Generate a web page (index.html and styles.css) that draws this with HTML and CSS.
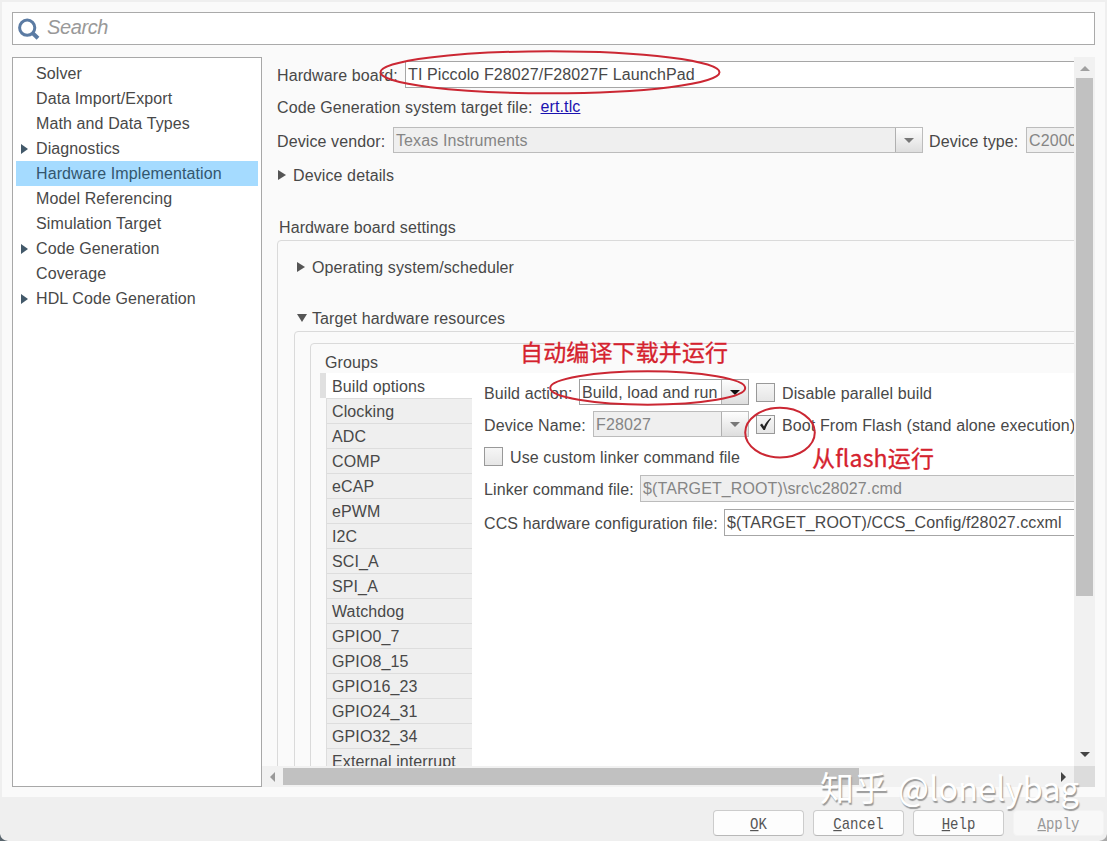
FILE: index.html
```html
<!DOCTYPE html>
<html lang="en">
<head>
    <meta charset="UTF-8">
    <meta name="viewport" content="width=device-width, initial-scale=1.0">
    <title>Configuration Parameters</title>
    <link rel="stylesheet" href="styles.css">
</head>
<body>
    <div class="dialog">
        <div class="dialog-body">
            <div class="search-box">
                <svg class="search-icon" width="24" height="24" viewBox="0 0 24 24">
                    <circle cx="9.2" cy="10.7" r="7.6" fill="none" stroke="#5b7ba3" stroke-width="3"/>
                    <path d="M14.5 16L20 21.2" stroke="#5b7ba3" stroke-width="4"/>
                </svg>
                <span class="search-placeholder">Search</span>
            </div>

            <div class="columns">
                <ul class="tree">
                    <li><span>Solver</span></li>
                    <li><span>Data Import/Export</span></li>
                    <li><span>Math and Data Types</span></li>
                    <li class="parent"><span>Diagnostics</span></li>
                    <li class="selected"><span>Hardware Implementation</span></li>
                    <li><span>Model Referencing</span></li>
                    <li><span>Simulation Target</span></li>
                    <li class="parent"><span>Code Generation</span></li>
                    <li><span>Coverage</span></li>
                    <li class="parent"><span>HDL Code Generation</span></li>
                </ul>

                <div class="scroll-area">
                    <div class="pane">
                        <div class="row row-board">
                            <label class="label-board">Hardware board:</label>
                            <div class="field field-board">TI Piccolo F28027/F28027F LaunchPad</div>
                        </div>
                        <div class="row row-target">
                            <label>Code Generation system target file:</label>
                            <a class="link" href="#">ert.tlc</a>
                        </div>
                        <div class="row row-vendor">
                            <label class="label-vendor">Device vendor:</label>
                            <div class="combo combo-vendor disabled">
                                <div class="combo-text">Texas Instruments</div>
                                <div class="combo-button"><i class="caret"></i></div>
                            </div>
                            <label class="label-type">Device type:</label>
                            <div class="field field-type disabled">C2000</div>
                        </div>
                        <div class="row row-details"><i class="arrow-right"></i><span>Device details</span></div>

                        <div class="section-title">Hardware board settings</div>
                        <div class="box box-settings">
                            <div class="row row-os"><i class="arrow-right"></i><span>Operating system/scheduler</span></div>
                            <div class="row row-resources"><i class="arrow-down"></i><span>Target hardware resources</span></div>
                            <div class="box box-resources">
                                <div class="box box-groups">
                                    <div class="groups-title">Groups</div>
                                    <div class="groups">
                                        <ul class="group-list">
                                            <li class="current">Build options</li>
                                            <li>Clocking</li>
                                            <li>ADC</li>
                                            <li>COMP</li>
                                            <li>eCAP</li>
                                            <li>ePWM</li>
                                            <li>I2C</li>
                                            <li>SCI_A</li>
                                            <li>SPI_A</li>
                                            <li>Watchdog</li>
                                            <li>GPIO0_7</li>
                                            <li>GPIO8_15</li>
                                            <li>GPIO16_23</li>
                                            <li>GPIO24_31</li>
                                            <li>GPIO32_34</li>
                                            <li>External interrupt</li>
                                        </ul>
                                        <div class="options">
                                            <div class="option-row">
                                                <label class="label-action">Build action:</label>
                                                <div class="combo combo-action">
                                                    <div class="combo-text">Build, load and run</div>
                                                    <div class="combo-button"><i class="caret"></i></div>
                                                </div>
                                                <div class="checkbox checkbox-second"></div>
                                                <span>Disable parallel build</span>
                                            </div>
                                            <div class="option-row">
                                                <label class="label-device">Device Name:</label>
                                                <div class="combo combo-device disabled">
                                                    <div class="combo-text">F28027</div>
                                                    <div class="combo-button"><i class="caret"></i></div>
                                                </div>
                                                <div class="checkbox checkbox-second">
                                                    <svg width="17" height="17" viewBox="0 0 17 17">
                                                        <path d="M3 9L5 7.5L7 10.5C8.5 7 10.5 4.5 13.5 2L14 3C11.5 6 9.5 9.5 8 14H6.5Z" fill="#222"/>
                                                    </svg>
                                                </div>
                                                <span>Boot From Flash (stand alone execution)</span>
                                            </div>
                                            <div class="option-row">
                                                <div class="checkbox"></div>
                                                <span>Use custom linker command file</span>
                                            </div>
                                            <div class="option-row">
                                                <label class="label-linker">Linker command file:</label>
                                                <div class="field field-file disabled">$(TARGET_ROOT)\src\c28027.cmd</div>
                                            </div>
                                            <div class="option-row option-row-last">
                                                <label class="label-ccs">CCS hardware configuration file:</label>
                                                <div class="field field-file">$(TARGET_ROOT)/CCS_Config/f28027.ccxml</div>
                                            </div>
                                        </div>
                                    </div>
                                </div>
                            </div>
                        </div>
                    </div>
                    <div class="scrollbar-v">
                        <i class="scroll-up"></i>
                        <div class="thumb-v"></div>
                        <i class="scroll-down"></i>
                    </div>
                    <div class="scrollbar-h">
                        <i class="scroll-left"></i>
                        <div class="thumb-h"></div>
                        <i class="scroll-right"></i>
                    </div>
                    <div class="scroll-corner"></div>
                </div>
            </div>
        </div>

        <div class="dialog-footer">
            <button><span><u>O</u>K</span></button>
            <button><span><u>C</u>ancel</span></button>
            <button><span><u>H</u>elp</span></button>
            <button disabled><span><u>A</u>pply</span></button>
        </div>
    </div>

    <!-- hand-drawn notes over the dialog -->
    <svg class="notes" width="1107" height="841" viewBox="0 0 1107 841">
        <g fill="none" stroke="#cb2733" stroke-width="2">
            <ellipse cx="550" cy="72.3" rx="169.5" ry="21"/>
            <ellipse cx="647.7" cy="388" rx="97.5" ry="16.7"/>
            <ellipse cx="780" cy="432.6" rx="34.8" ry="24.8"/>
        </g>
        <text class="note" x="520" y="361" textLength="208">自动编译下载并运行</text>
        <text class="note" x="812" y="467" textLength="122">从flash运行</text>
        <text class="watermark" x="820" y="801">知乎</text>
        <text class="watermark watermark-name" x="898" y="801" textLength="181" lengthAdjust="spacingAndGlyphs">@lonelybag</text>
        <path d="M0 834Q1 840 8 841H0Z" fill="#59656d"/>
        <path d="M1107 834Q1106 840 1099 841H1107Z" fill="#aaa"/>
    </svg>
</body>
</html>
```
FILE: styles.css
```css
* {
    box-sizing: border-box;
}

body {
    margin: 0;
    background: #efefef;
    color: #484848;
    font-family: "Liberation Sans", Arial, sans-serif;
    font-size: 16px;
    letter-spacing: 0.11px;
    line-height: 20px;
    white-space: nowrap;
    overflow: hidden;
}

ul {
    margin: 0;
    padding: 0;
    list-style: none;
}

.dialog {
    display: flex;
    flex-direction: column;
    width: 1107px;
    height: 841px;
    padding: 2px 2px 0;
}

.dialog-body {
    height: 795px;
    padding: 10px;
    background: #fafafa;
}

.search-box {
    display: flex;
    align-items: center;
    height: 33px;
    padding: 0 5px;
    margin-bottom: 12px;
    border: 1px solid #aaa;
    background: #fff;
}

.search-placeholder {
    margin: -3px 0 0 5px;
    color: #999;
    font-size: 20px;
    font-style: italic;
    letter-spacing: -0.4px;
}

.columns {
    display: flex;
    height: 730px;
}

.tree {
    width: 250px;
    padding: 3px;
    border: 1px solid #a8a8a8;
    background: #fff;
}

.tree li {
    display: flex;
    align-items: center;
    height: 25px;
    padding-left: 20px;
}

.tree .selected {
    background: #a5dbff;
    color: #33566e;
}

.tree .parent {
    padding-left: 5px;
}

.tree .parent::before {
    content: "";
    margin-right: 8px;
    border: solid transparent;
    border-width: 5px 0 5px 7px;
    border-left-color: #43596a;
}

.scroll-area {
    display: grid;
    grid-template-columns: 812px 21px;
    grid-template-rows: 709px 21px;
}

.pane {
    overflow: hidden;
    padding-left: 15px;
}

.row {
    display: flex;
    align-items: center;
}

.row > * {
    flex: none;
}

.row > label,
.row > span {
    padding-top: 2px;
}

.row-vendor > label,
.option-row > label,
.option-row > span {
    padding-top: 3px;
}

.field {
    height: 27px;
    padding: 0 3px;
    border: 1px solid #a6a6a6;
    background: #fff;
    line-height: 25px;
}

.field.disabled,
.combo.disabled {
    border-color: #bcbcbc;
    background: #efefef;
    color: #858585;
}

.combo {
    display: flex;
    height: 26px;
    border: 1px solid #a0a0a0;
    background: #fff;
    line-height: 25px;
}

.combo-text {
    flex: 1;
    padding-left: 2px;
}

.combo-button {
    display: flex;
    align-items: center;
    justify-content: center;
    width: 27px;
    border-left: 1px solid #b0b0b0;
    background: linear-gradient(#fdfdfd, #dedede);
}

.caret {
    border: solid transparent;
    border-width: 5px 5px 0;
    border-top-color: #111;
}

.disabled .caret {
    border-top-color: #777;
}

.row-board {
    height: 27px;
    margin-top: 4px;
}

.label-board {
    width: 128px;
}

.field-board {
    width: 900px;
    padding-left: 2px;
}

.row-target {
    height: 20px;
    margin-top: 9px;
}

.link {
    margin-left: 8px;
    color: #1a12b0;
}

.row-vendor {
    height: 26px;
    margin-top: 10px;
}

.row-vendor .combo,
.row-vendor .field {
    height: 26px;
    line-height: 26px;
}

.label-vendor {
    width: 116px;
}

.combo-vendor {
    width: 530px;
}

.label-type {
    width: 97px;
    margin-left: 6px;
}

.field-type {
    width: 300px;
    padding-left: 2px;
}

.row-details {
    height: 20px;
    margin-top: 12px;
    margin-left: 1px;
}

.arrow-right {
    margin-right: 7px;
    border: solid transparent;
    border-width: 5px 0 5px 8px;
    border-left-color: #555;
}

.arrow-down {
    margin-right: 5px;
    border: solid transparent;
    border-width: 8px 5px 0;
    border-top-color: #555;
}

.section-title {
    margin: 33px 0 2px 2px;
}

.box {
    width: 1000px;
    border: 1px solid #dadada;
    border-radius: 4px;
}

.box-settings {
    height: 700px;
    padding: 16px 0 0 16px;
}

.row-os {
    height: 20px;
    padding-left: 3px;
    margin-bottom: 31px;
}

.row-resources {
    height: 20px;
    padding-left: 3px;
}

.box-resources {
    margin-top: 3px;
    padding: 11px 0 0 15px;
    height: 600px;
}

.box-groups {
    height: 580px;
    padding: 8px 0 0 9px;
}

.groups-title {
    padding-left: 5px;
    line-height: 21px;
}

.groups {
    display: flex;
}

.group-list {
    flex: none;
    width: 152px;
}

.group-list li {
    height: 25px;
    margin-left: 6px;
    padding-left: 5px;
    border-top: 1px solid #ddd;
    border-left: 1px solid #ddd;
    background: #efefef;
    line-height: 25px;
}

.group-list .current {
    margin-left: 0;
    padding-left: 6px;
    border-top: 0;
    border-left: 6px solid #e0e0e0;
    background: #fff;
    line-height: 27px;
}

.options {
    flex: 1;
    height: 560px;
    padding: 6px 0 0 12px;
    background: #fff;
}

.option-row {
    display: flex;
    align-items: center;
    height: 26px;
    margin-bottom: 6px;
}

.option-row-last {
    margin-top: 8px;
}

.option-row > * {
    flex: none;
}

.label-action {
    width: 95px;
}

.combo-action {
    width: 170px;
}

.label-device {
    width: 109px;
}

.combo-device {
    width: 156px;
}

.label-linker {
    width: 156px;
}

.label-ccs {
    width: 240px;
}

.field-file {
    width: 600px;
    padding-left: 2px;
}

.checkbox {
    width: 19px;
    height: 19px;
    margin-right: 7px;
    border: 1px solid #999;
    background: linear-gradient(#f6f6f6, #e6e6e6);
}

.checkbox svg {
    display: block;
}

.checkbox-second {
    margin-left: 7px;
}

.scrollbar-v {
    display: flex;
    flex-direction: column;
    align-items: center;
    background: #f1f1f1;
}

.thumb-v {
    width: 17px;
    height: 518px;
    margin-top: 7px;
    background: #c1c1c1;
}

.scroll-up,
.scroll-down {
    border: solid transparent;
    border-width: 0 5px 5px;
    border-bottom-color: #a0a0a0;
}

.scroll-up {
    margin-top: 9px;
}

.scroll-down {
    margin: auto 0 9px;
    border-width: 5px 5px 0;
    border-top-color: #444;
}

.scrollbar-h {
    display: flex;
    align-items: center;
    background: #f1f1f1;
}

.thumb-h {
    width: 576px;
    height: 17px;
    margin-left: 8px;
    background: #c1c1c1;
}

.scroll-left,
.scroll-right {
    border: solid transparent;
    border-width: 5px 5px 5px 0;
    border-right-color: #999;
}

.scroll-left {
    margin-left: 8px;
}

.scroll-right {
    margin: 0 8px 0 auto;
    border-width: 5px 0 5px 5px;
    border-left-color: #444;
}

.scroll-corner {
    background: #dcdcdc;
}

.dialog-footer {
    display: flex;
    justify-content: flex-end;
    gap: 9px;
    padding: 13px 1px 0 0;
}

button {
    width: 91px;
    height: 26px;
    padding: 2px 0 0;
    border: 1px solid #ccc;
    border-bottom-color: #b8b8b8;
    border-radius: 4px;
    background: #fdfdfd;
    color: #555;
    font-family: "Liberation Mono", monospace;
    font-size: 14px;
}

button span {
    display: inline-block;
    transform: scaleY(1.2);
}

button:disabled {
    border-color: #f3f3f3;
    background: #f8f8f8;
    color: #999;
}

.notes {
    position: absolute;
    top: 0;
    left: 0;
    pointer-events: none;
    letter-spacing: 0;
}

.note {
    fill: #d5222e;
    stroke: #d5222e;
    stroke-width: 0.3px;
    font-family: "Noto Sans CJK SC", sans-serif;
    font-size: 23px;
}

.watermark {
    fill: #fff;
    font-family: "Noto Sans CJK SC", sans-serif;
    font-size: 34px;
    text-shadow: 1px 2px 1px #999;
}

.watermark-name {
    font-size: 33px;
}
```
